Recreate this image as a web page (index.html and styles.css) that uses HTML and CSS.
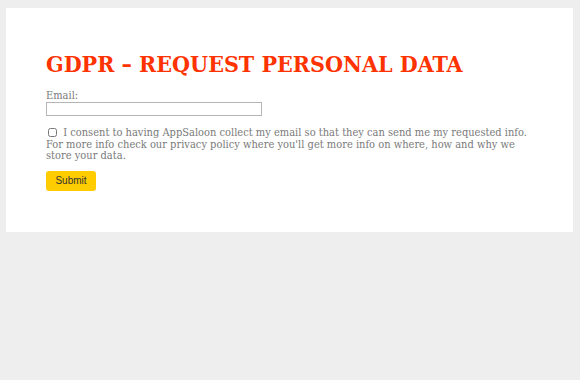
FILE: index.html
```html
<!DOCTYPE html>
<html lang="en">
<head>
    <meta charset="UTF-8">
    <title>GDPR - Request personal data</title>
    <link rel="stylesheet" href="styles.css">
</head>
<body>
    <div class="page">
        <h1 class="title">GDPR – REQUEST PERSONAL DATA</h1>
        <form class="gdpr-form">
            <label class="field-label" for="email">Email:</label>
            <input class="field-input" type="email" id="email">
            <p class="consent">
                <input class="consent-box" type="checkbox" id="consent">
                I consent to having AppSaloon collect my email so that they can send me my requested info.
                For more info check our privacy policy where you'll get more info on where, how and why we
                store your data.
            </p>
            <button class="submit-button" type="button">Submit</button>
        </form>
    </div>
</body>
</html>
```

FILE: styles.css
```css
body {
    margin: 0;
    padding: 8px 7px 0 6px;
    background: #eeeeee;
    font-family: "DejaVu Serif Condensed", "DejaVu Serif", serif;
    color: #7a7a7a;
}
.page {
    background: white;
    padding: 40px 40px 41px;
}
.title {
    margin: 0 0 10px;
    font-size: 23px;
    line-height: 32px;
    font-weight: bold;
    color: #ff3300;
}
.gdpr-form {
    font-size: 11px;
}
.field-label {
    display: block;
    line-height: 12px;
}
.field-input {
    display: block;
    width: 216px;
    height: 14px;
    margin: 0;
    padding: 0;
    border: 1px solid #b5b5b5;
    box-sizing: border-box;
}
.consent {
    margin: 11px 0 9px;
    line-height: 11.5px;
}
.consent-box {
    width: 9px;
    height: 9px;
    margin: 0 3px 0 2px;
    vertical-align: -1px;
}
.submit-button {
    display: block;
    width: 50px;
    height: 20px;
    padding: 0;
    border: none;
    border-radius: 3px;
    background: #ffcc00;
    color: #333;
    font-family: "Liberation Sans", Arial, sans-serif;
    font-size: 10px;
}
```
